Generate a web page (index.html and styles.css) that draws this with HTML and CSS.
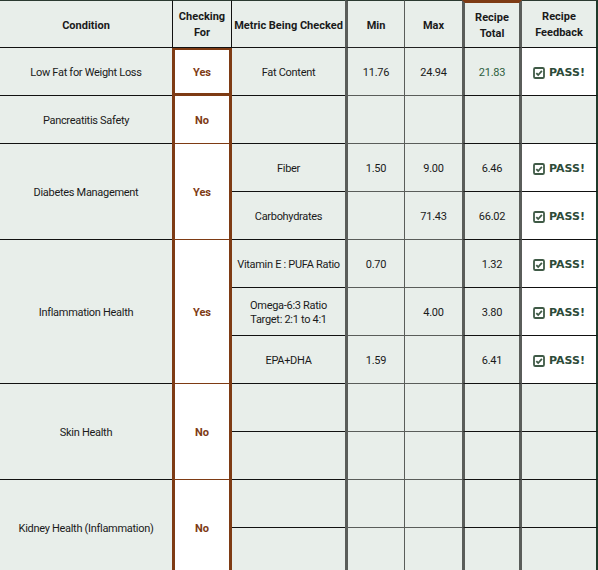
FILE: index.html
```html
<!DOCTYPE html>
<html>
<head>
<meta charset="utf-8">
<link rel="stylesheet" href="styles.css">
</head>
<body>
<div class="sheet">
  <div class="cell hd c1">Condition</div>
  <div class="cell hd c2">Checking<br>For</div>
  <div class="cell hd c3">Metric Being Checked</div>
  <div class="cell hd c4">Min</div>
  <div class="cell hd c5">Max</div>
  <div class="cell hd c6">Recipe<br>Total</div>
  <div class="cell hd c7">Recipe<br>Feedback</div>

  <div class="cell c1">Low Fat for Weight Loss</div>
  <div class="cell c2 flag box">Yes</div>
  <div class="cell c3">Fat Content</div>
  <div class="cell c4 num">11.76</div>
  <div class="cell c5 num">24.94</div>
  <div class="cell c6 num good">21.83</div>
  <div class="cell c7 pass"><svg class="chk" viewBox="0 0 12 12" width="12" height="12"><rect x="1" y="1" width="10" height="10" rx="1.3" fill="none" stroke="#3f5a46" stroke-width="1.8"/><path d="M3.3 6.1 L5.2 8 L8.9 3.9" fill="none" stroke="#3f5a46" stroke-width="1.8"/></svg><span>PASS!</span></div>

  <div class="cell c1">Pancreatitis Safety</div>
  <div class="cell c2 flag">No</div>
  <div class="cell c3"></div>
  <div class="cell c4"></div>
  <div class="cell c5"></div>
  <div class="cell c6"></div>
  <div class="cell c7"></div>

  <div class="cell c1 span2">Diabetes Management</div>
  <div class="cell c2 flag span2">Yes</div>
  <div class="cell c3">Fiber</div>
  <div class="cell c4 num">1.50</div>
  <div class="cell c5 num">9.00</div>
  <div class="cell c6 num">6.46</div>
  <div class="cell c7 pass"><svg class="chk" viewBox="0 0 12 12" width="12" height="12"><rect x="1" y="1" width="10" height="10" rx="1.3" fill="none" stroke="#3f5a46" stroke-width="1.8"/><path d="M3.3 6.1 L5.2 8 L8.9 3.9" fill="none" stroke="#3f5a46" stroke-width="1.8"/></svg><span>PASS!</span></div>
  <div class="cell c3">Carbohydrates</div>
  <div class="cell c4 num"></div>
  <div class="cell c5 num">71.43</div>
  <div class="cell c6 num">66.02</div>
  <div class="cell c7 pass"><svg class="chk" viewBox="0 0 12 12" width="12" height="12"><rect x="1" y="1" width="10" height="10" rx="1.3" fill="none" stroke="#3f5a46" stroke-width="1.8"/><path d="M3.3 6.1 L5.2 8 L8.9 3.9" fill="none" stroke="#3f5a46" stroke-width="1.8"/></svg><span>PASS!</span></div>

  <div class="cell c1 span3">Inflammation Health</div>
  <div class="cell c2 flag span3">Yes</div>
  <div class="cell c3">Vitamin E : PUFA Ratio</div>
  <div class="cell c4 num">0.70</div>
  <div class="cell c5 num"></div>
  <div class="cell c6 num">1.32</div>
  <div class="cell c7 pass"><svg class="chk" viewBox="0 0 12 12" width="12" height="12"><rect x="1" y="1" width="10" height="10" rx="1.3" fill="none" stroke="#3f5a46" stroke-width="1.8"/><path d="M3.3 6.1 L5.2 8 L8.9 3.9" fill="none" stroke="#3f5a46" stroke-width="1.8"/></svg><span>PASS!</span></div>
  <div class="cell c3">Omega-6:3 Ratio<br>Target: 2:1 to 4:1</div>
  <div class="cell c4 num"></div>
  <div class="cell c5 num">4.00</div>
  <div class="cell c6 num">3.80</div>
  <div class="cell c7 pass"><svg class="chk" viewBox="0 0 12 12" width="12" height="12"><rect x="1" y="1" width="10" height="10" rx="1.3" fill="none" stroke="#3f5a46" stroke-width="1.8"/><path d="M3.3 6.1 L5.2 8 L8.9 3.9" fill="none" stroke="#3f5a46" stroke-width="1.8"/></svg><span>PASS!</span></div>
  <div class="cell c3">EPA+DHA</div>
  <div class="cell c4 num">1.59</div>
  <div class="cell c5 num"></div>
  <div class="cell c6 num">6.41</div>
  <div class="cell c7 pass"><svg class="chk" viewBox="0 0 12 12" width="12" height="12"><rect x="1" y="1" width="10" height="10" rx="1.3" fill="none" stroke="#3f5a46" stroke-width="1.8"/><path d="M3.3 6.1 L5.2 8 L8.9 3.9" fill="none" stroke="#3f5a46" stroke-width="1.8"/></svg><span>PASS!</span></div>

  <div class="cell c1 span2">Skin Health</div>
  <div class="cell c2 flag span2">No</div>
  <div class="cell c3"></div>
  <div class="cell c4"></div>
  <div class="cell c5"></div>
  <div class="cell c6"></div>
  <div class="cell c7"></div>
  <div class="cell c3"></div>
  <div class="cell c4"></div>
  <div class="cell c5"></div>
  <div class="cell c6"></div>
  <div class="cell c7"></div>

  <div class="cell c1 span2">Kidney Health (Inflammation)</div>
  <div class="cell c2 flag span2">No</div>
  <div class="cell c3"></div>
  <div class="cell c4"></div>
  <div class="cell c5"></div>
  <div class="cell c6"></div>
  <div class="cell c7"></div>
  <div class="cell c3"></div>
  <div class="cell c4"></div>
  <div class="cell c5"></div>
  <div class="cell c6"></div>
  <div class="cell c7"></div>
</div>
</body>
</html>
```
FILE: styles.css
```css
html, body {
  margin: 0;
  padding: 0;
  background: #e8eeea;
}
body {
  font-family: Roboto, "Liberation Sans", sans-serif;
  font-size: 11px;
  color: #1a1a1a;
  overflow: hidden;
}
.sheet {
  display: grid;
  grid-template-columns: 172px 60px 113px 60px 57px 60px 76px;
  grid-template-rows: 48px;
  grid-auto-rows: 48px;
  width: 598px;
}
.cell {
  box-sizing: border-box;
  background: #e8eeea;
  display: flex;
  align-items: center;
  justify-content: center;
  text-align: center;
  line-height: 14px;
  letter-spacing: -0.3px;
  padding-top: 2px;
  border-bottom: 1px solid #111;
}
.hd {
  font-weight: 700;
  line-height: 16px;
  letter-spacing: 0;
  border-top: 1px solid #2b3a31;
  border-bottom: 1px solid #111;
  padding-top: 3px;
}
.span2 { grid-row: span 2; }
.span3 { grid-row: span 3; }

.c2 {
  background: #ffffff;
  border-left: 3px solid #7e3b14;
  border-right: 3px solid #7e3b14;
  border-bottom: 1px solid #7e3b14;
}
.c2.hd {
  background: #e8eeea;
  border-left: 1px solid #111;
  border-right: 1px solid #111;
  border-bottom: 1px solid #111;
  padding-top: 1px;
}
.c2.box {
  border-top: 2px solid #7e3b14;
  border-bottom: 3px solid #7e3b14;
}
.flag {
  font-weight: 700;
  color: #7e3b14;
  letter-spacing: 0;
}
.c4 {
  border-left: 3px solid #5a5d5a;
  border-right: 1px solid #5a5d5a;
  border-bottom: 1px solid #5a5d5a;
}
.c5 {
  border-bottom: 1px solid #5a5d5a;
}
.c4.hd, .c5.hd { border-bottom: 1px solid #222; }
.c6 {
  border-left: 3px solid #5a5d5a;
  border-right: 3px solid #5a5d5a;
}
.c6.hd {
  border-top: 3px solid #7e3b14;
  padding-top: 1px;
}
.c7 {
  border-right: 2px solid #1f3a2a;
}
.c7.hd { padding-top: 1px; }
.num { letter-spacing: -0.2px; }
.good { color: #2e5e3e; }
.pass {
  background: #ffffff;
  gap: 4px;
  font-family: "DejaVu Sans", sans-serif;
  font-weight: 700;
  font-size: 11px;
  letter-spacing: 0;
  color: #2d4b39;
}
.chk { display: block; }
```
